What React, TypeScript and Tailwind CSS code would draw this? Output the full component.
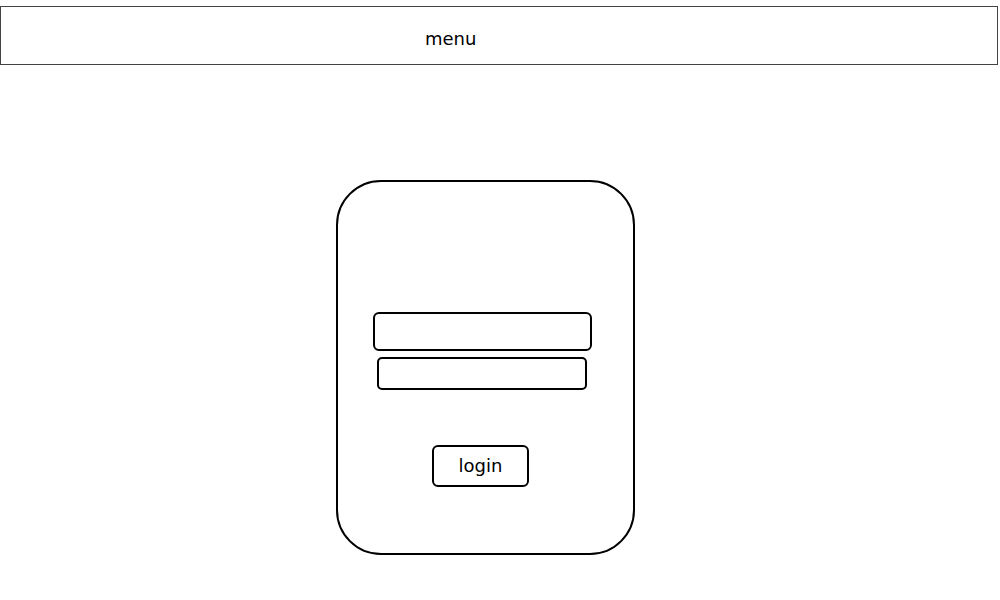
export default function App() {
  return (
    <div className="w-[1000px] h-[600px] bg-white text-black font-['DejaVu_Sans',sans-serif]">
      <div className="pt-[6px]">
        <div className="w-[998px] h-[59px] border border-[#444444] flex items-center pl-[424px] pt-[6px] text-[18px] leading-none">
          menu
        </div>
      </div>

      <div className="ml-[336px] mt-[115px] w-[299px] h-[375px] border-2 border-black rounded-[45px] flex flex-col pt-[130px]">
        <div className="ml-[35px] w-[219px] h-[39px] border-2 border-black rounded-[6px]" />
        <div className="ml-[39px] mt-[6px] w-[210px] h-[33px] border-2 border-black rounded-[5px]" />
        <button className="ml-[94px] mt-[55px] w-[97px] h-[42px] border-2 border-black rounded-[6px] text-[18px] leading-none flex items-center justify-center">
          login
        </button>
      </div>
    </div>
  );
}
